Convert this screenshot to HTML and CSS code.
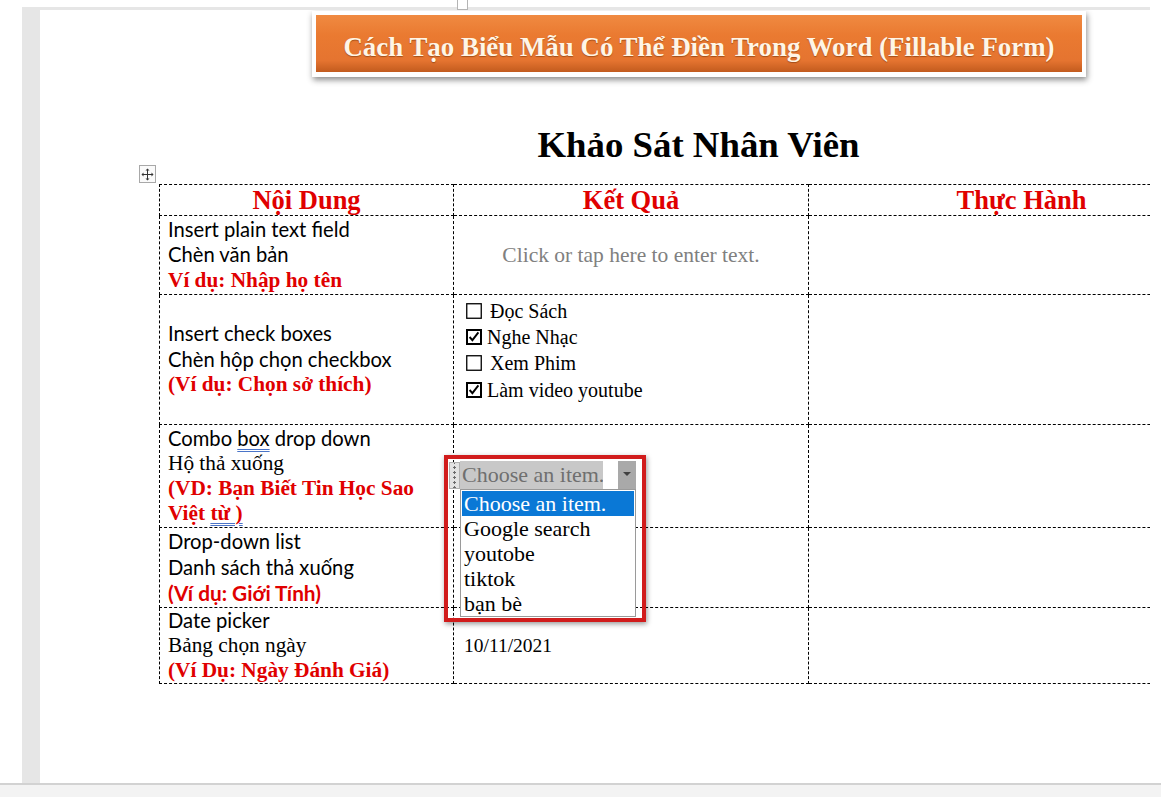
FILE: index.html
```html
<!DOCTYPE html>
<html lang="vi">
<head>
<meta charset="utf-8">
<title>Khảo Sát Nhân Viên</title>
<link rel="stylesheet" href="styles.css">
</head>
<body>
<div class="frame">
  <span class="anchor-mark"></span>
  <div class="page">
    <div class="banner">
      <div class="banner-inner">Cách Tạo Biểu Mẫu Có Thể Điền Trong Word (Fillable Form)</div>
    </div>
    <div class="doc">
      <h1 class="heading">Khảo Sát Nhân Viên</h1>
      <div class="table-wrap">
        <span class="move-handle">
          <svg width="13" height="13" viewBox="0 0 13 13">
            <path d="M6.5 1v11M1 6.5h11" stroke="#333" stroke-width="1" fill="none"/>
            <path d="M6.5 0.5l-2 2h4zM6.5 12.5l-2-2h4zM0.5 6.5l2-2v4zM12.5 6.5l-2-2v4z" fill="#333"/>
          </svg>
        </span>
        <table class="survey">
          <colgroup>
            <col class="c1"><col class="c2"><col class="c3">
          </colgroup>
          <tr class="r-head">
            <th>Nội Dung</th>
            <th>Kết Quả</th>
            <th>Thực Hành</th>
          </tr>
          <tr class="r1">
            <td class="lead">
              <div class="sans">Insert plain text field</div>
              <div class="sans">Chèn văn bản</div>
              <div class="red-serif">Ví dụ: Nhập họ tên</div>
            </td>
            <td class="placeholder">Click or tap here to enter text.</td>
            <td></td>
          </tr>
          <tr class="r2">
            <td class="lead">
              <div class="sans">Insert check boxes</div>
              <div class="sans">Chèn hộp chọn checkbox</div>
              <div class="red-serif">(Ví dụ: Chọn sở thích)</div>
            </td>
            <td class="checks">
              <div class="check-item">
                <svg class="box" width="16" height="16" viewBox="0 0 16 16"><rect x="0.75" y="0.75" width="14.5" height="14.5" fill="none" stroke="#000" stroke-width="1.3"/></svg>
                <span class="check-label gap-wide">Đọc Sách</span>
              </div>
              <div class="check-item">
                <svg class="box" width="16" height="16" viewBox="0 0 16 16"><rect x="1" y="1" width="14" height="14" fill="none" stroke="#000" stroke-width="2"/><path d="M3.6 8l2.8 3.2 6-7.8" fill="none" stroke="#000" stroke-width="1.9"/></svg>
                <span class="check-label">Nghe Nhạc</span>
              </div>
              <div class="check-item">
                <svg class="box" width="16" height="16" viewBox="0 0 16 16"><rect x="0.75" y="0.75" width="14.5" height="14.5" fill="none" stroke="#000" stroke-width="1.3"/></svg>
                <span class="check-label gap-wide">Xem Phim</span>
              </div>
              <div class="check-item">
                <svg class="box" width="16" height="16" viewBox="0 0 16 16"><rect x="1" y="1" width="14" height="14" fill="none" stroke="#000" stroke-width="2"/><path d="M3.6 8l2.8 3.2 6-7.8" fill="none" stroke="#000" stroke-width="1.9"/></svg>
                <span class="check-label">Làm video youtube</span>
              </div>
            </td>
            <td></td>
          </tr>
          <tr class="r3">
            <td class="lead">
              <div class="sans">Combo <span class="gram">box</span> drop down</div>
              <div class="serif">Hộ thả xuống</div>
              <div class="red-serif">(VD: Bạn Biết Tin Học Sao</div>
              <div class="red-serif">Việt <span class="gram">từ )</span></div>
            </td>
            <td></td>
            <td></td>
          </tr>
          <tr class="r4">
            <td class="lead">
              <div class="sans">Drop-down list</div>
              <div class="sans">Danh sách thả xuống</div>
              <div class="red-sans">(Ví dụ: Giới Tính)</div>
            </td>
            <td></td>
            <td></td>
          </tr>
          <tr class="r5">
            <td class="lead">
              <div class="sans">Date picker</div>
              <div class="serif">Bảng chọn ngày</div>
              <div class="red-serif">(Ví Dụ: Ngày Đánh Giá)</div>
            </td>
            <td class="date">10/11/2021</td>
            <td></td>
          </tr>
        </table>

        <div class="dropdown">
          <div class="combo">
            <span class="combo-grip"></span>
            <span class="combo-value">Choose an item.</span>
            <span class="combo-gap"></span>
            <span class="combo-arrow"></span>
          </div>
          <ul class="combo-list">
            <li class="selected">Choose an item.</li>
            <li>Google search</li>
            <li>youtobe</li>
            <li>tiktok</li>
            <li>bạn bè</li>
          </ul>
        </div>
      </div>
    </div>
  </div>
</div>
<div class="bottom-strip"></div>
</body>
</html>
```
FILE: styles.css
```css
* { box-sizing: border-box; }

html, body {
  margin: 0;
  padding: 0;
  background: #ffffff;
  overflow: hidden;
}

body {
  width: 1161px;
  height: 797px;
  font-family: "Liberation Serif", "Times New Roman", serif;
}

.frame {
  position: relative;
  margin: 7px 0 0 22px;
  width: 1128px;
  height: 776px;
  padding: 3px 0 0 18px;
  background: #e6e6e6;
}

.anchor-mark {
  position: absolute;
  left: 435px;
  top: -7px;
  width: 11px;
  height: 10px;
  border: 1px solid #b4b4b4;
  border-top: none;
  background: #fff;
}

.page {
  position: relative;
  width: 1110px;
  height: 773px;
  background: #ffffff;
  overflow: hidden;
  padding-top: 1px;
}

.bottom-strip {
  width: 1161px;
  height: 14px;
  border-top: 2px solid #d2d2d2;
  background: #f3f3f3;
}

/* ---------- banner ---------- */
.banner {
  margin-left: 272px;
  width: 774px;
  height: 66px;
  padding: 4px 4px 5px 4px;
  background: #ffffff;
  box-shadow: 1px 3px 6px rgba(0, 0, 0, 0.45);
}

.banner-inner {
  height: 57px;
  display: flex;
  align-items: center;
  justify-content: center;
  background: linear-gradient(to bottom, #f08a41 0%, #ea7a31 35%, #e57430 80%, #c25b1e 100%);
  color: #fff5e6;
  font-family: "Liberation Serif", "Times New Roman", serif;
  font-weight: bold;
  font-size: 26.9px;
  text-shadow: 0 1px 1px rgba(110, 50, 10, 0.55);
  padding-top: 8px;
  white-space: nowrap;
}

/* ---------- document ---------- */
.doc {
  margin-left: 119px;
  width: 1075px;
}

.heading {
  margin: 48px 0 0 0;
  padding-left: 4px;
  height: 59px;
  line-height: 40px;
  text-align: center;
  font-family: "Liberation Serif", "Times New Roman", serif;
  font-weight: bold;
  font-size: 36.8px;
  color: #000;
}

.table-wrap {
  position: relative;
}

.move-handle {
  position: absolute;
  left: -20px;
  top: -19px;
  width: 17px;
  height: 18px;
  border: 1px solid #a8a8a8;
  background: #fafafa;
  display: flex;
  align-items: center;
  justify-content: center;
}

.survey {
  table-layout: fixed;
  border-collapse: collapse;
  width: 1075px;
}

.survey col.c1 { width: 294px; }
.survey col.c2 { width: 355px; }
.survey col.c3 { width: 426px; }

.survey th,
.survey td {
  border: 1px dashed #000;
  padding: 0;
  vertical-align: middle;
}

.survey th {
  height: 31px;
  color: #e00000;
  font-family: "Liberation Serif", "Times New Roman", serif;
  font-weight: bold;
  font-size: 26.5px;
  line-height: 30px;
  text-align: center;
}

.r1 td { height: 79px; }
.r2 td { height: 130px; }
.r3 td { height: 103px; }
.r4 td { height: 80px; }
.r5 td { height: 76px; }

.lead {
  padding-left: 8px !important;
  line-height: 25.5px;
}

.r3 .lead,
.r5 .lead { line-height: 25px; }

.sans {
  font-family: "Lato", "Liberation Sans", sans-serif;
  font-size: 20.2px;
  color: #000;
}

.serif {
  font-family: "Liberation Serif", "Times New Roman", serif;
  font-size: 21.3px;
  color: #000;
}

.red-serif {
  font-family: "Liberation Serif", "Times New Roman", serif;
  font-weight: bold;
  font-size: 21.3px;
  color: #e00000;
}

.red-sans {
  font-family: "Lato", "Liberation Sans", sans-serif;
  font-weight: bold;
  font-size: 20.8px;
  color: #e00000;
}

.gram {
  text-decoration: underline double #4a74c8;
  text-decoration-thickness: 1px;
  text-underline-offset: 3px;
}

.placeholder {
  text-align: center;
  color: #808080;
  font-family: "Liberation Serif", "Times New Roman", serif;
  font-size: 21.5px;
}

.checks {
  vertical-align: top !important;
  padding: 3px 0 0 12px !important;
}

.check-item {
  display: flex;
  align-items: center;
  height: 26.3px;
  font-family: "Liberation Serif", "Times New Roman", serif;
  font-size: 20px;
  color: #000;
}

.check-item .box {
  flex: none;
  margin-top: -1px;
}

.check-label { margin-left: 5px; }
.check-label.gap-wide { margin-left: 8px; }

.date {
  padding-left: 10px !important;
  font-family: "Liberation Serif", "Times New Roman", serif;
  font-size: 19.5px;
  color: #000;
}

/* ---------- dropdown overlay ---------- */
.dropdown {
  position: absolute;
  left: 285px;
  top: 271px;
  width: 202px;
  height: 167px;
  border: 4px solid #d11c1c;
  background: transparent;
  box-shadow: 1px 2px 5px rgba(0, 0, 0, 0.4);
  padding: 2px 0 0 1px;
}

.combo {
  display: flex;
  height: 28px;
  width: 187px;
}

.combo-grip {
  width: 11px;
  height: 27px;
  margin-top: 1px;
  border: 1px solid #b0b0b0;
  background:
    radial-gradient(circle, #6a6a6a 1.1px, transparent 1.3px) 0 2px / 9px 5px repeat-y,
    #e2e2e2;
}

.combo-value {
  width: 143px;
  background: #c8c8c8;
  color: #6f6f6f;
  font-family: "Liberation Serif", "Times New Roman", serif;
  font-size: 22px;
  line-height: 28px;
  padding-left: 2px;
  white-space: nowrap;
  overflow: hidden;
}

.combo-gap {
  width: 15px;
  background: #ffffff;
}

.combo-arrow {
  width: 18px;
  background: #a9a9a9;
  position: relative;
}

.combo-arrow::after {
  content: "";
  position: absolute;
  left: 5px;
  top: 11px;
  border-left: 4px solid transparent;
  border-right: 4px solid transparent;
  border-top: 4px solid #404040;
}

.combo-list {
  list-style: none;
  margin: 0 0 0 11px;
  padding: 1px;
  width: 176px;
  height: 128px;
  border: 1px solid #9a9a9a;
  background: #ffffff;
  font-family: "Liberation Serif", "Times New Roman", serif;
  font-size: 22px;
  color: #000;
}

.combo-list li {
  height: 25px;
  line-height: 25px;
  padding-left: 2px;
  white-space: nowrap;
}

.combo-list li.selected {
  background: #0a78d6;
  color: #ffffff;
}
```
